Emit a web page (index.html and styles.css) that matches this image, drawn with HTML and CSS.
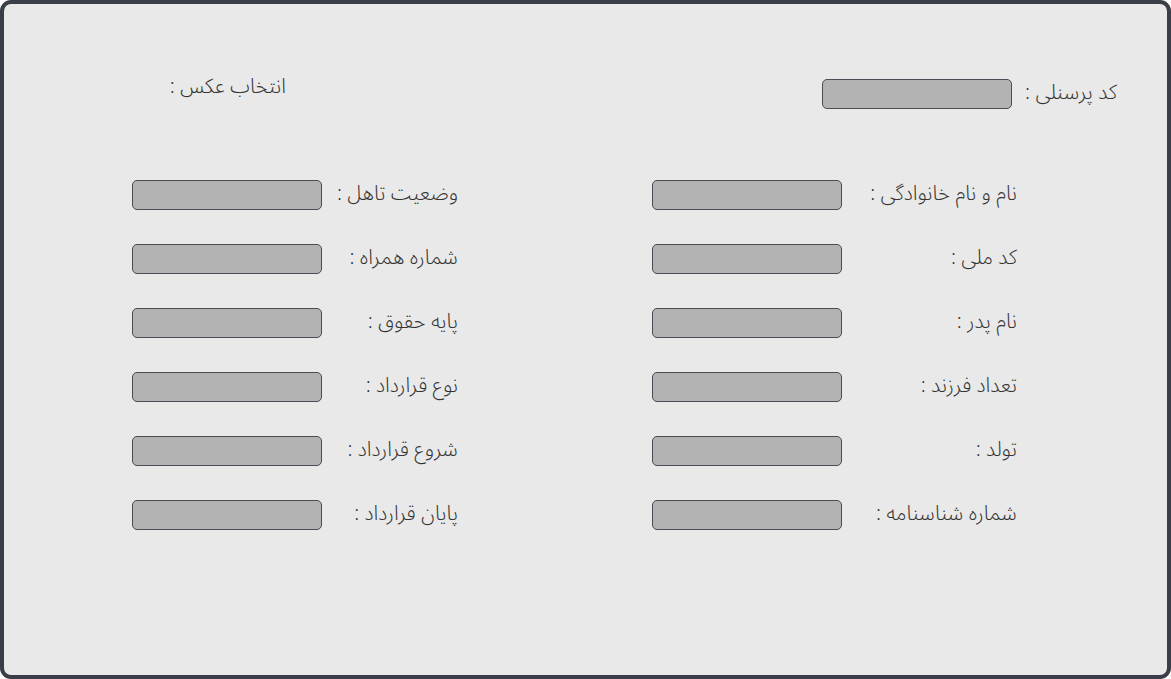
FILE: index.html
```html
<!DOCTYPE html>
<html lang="fa" dir="rtl">
<head>
<meta charset="utf-8">
<title>فرم پرسنل</title>
<link rel="stylesheet" href="styles.css">
</head>
<body>
<div class="panel">
  <div class="top-row">
    <div class="field top-field">
      <span class="label top-label">کد پرسنلی :</span>
      <span class="input"></span>
    </div>
    <div class="photo-label">انتخاب عکس :</div>
  </div>
  <div class="columns">
    <div class="column right-col">
      <div class="field"><span class="label">نام و نام خانوادگی :</span><span class="input"></span></div>
      <div class="field"><span class="label">کد ملی :</span><span class="input"></span></div>
      <div class="field"><span class="label">نام پدر :</span><span class="input"></span></div>
      <div class="field"><span class="label">تعداد فرزند :</span><span class="input"></span></div>
      <div class="field"><span class="label">تولد :</span><span class="input"></span></div>
      <div class="field"><span class="label">شماره شناسنامه :</span><span class="input"></span></div>
    </div>
    <div class="column left-col">
      <div class="field"><span class="label">وضعیت تاهل :</span><span class="input"></span></div>
      <div class="field"><span class="label">شماره همراه :</span><span class="input"></span></div>
      <div class="field"><span class="label">پایه حقوق :</span><span class="input"></span></div>
      <div class="field"><span class="label">نوع قرارداد :</span><span class="input"></span></div>
      <div class="field"><span class="label">شروع قرارداد :</span><span class="input"></span></div>
      <div class="field"><span class="label">پایان قرارداد :</span><span class="input"></span></div>
    </div>
  </div>
</div>
</body>
</html>
```
FILE: styles.css
```css
html, body {
  margin: 0;
  padding: 0;
  background: #ffffff;
}
body {
  font-family: "Noto Sans Arabic", "DejaVu Sans", sans-serif;
  font-size: 20.5px;
  font-weight: 300;
  color: #333333;
}
.panel {
  box-sizing: border-box;
  width: 1171px;
  height: 679px;
  border: 4px solid #393e48;
  border-radius: 11px;
  background: #e9e9e9;
  padding: 75px 50px 0 128px;
}
.top-row {
  display: flex;
  justify-content: space-between;
  align-items: flex-start;
}
.field {
  display: flex;
  align-items: center;
  height: 30px;
}
.label {
  display: block;
  line-height: 30px;
  white-space: nowrap;
  margin-top: -3px;
}
.top-label {
  width: 105px;
}
.input {
  display: block;
  box-sizing: border-box;
  width: 190px;
  height: 30px;
  background: #b3b3b3;
  border: 1px solid #4a4d55;
  border-radius: 5px;
}
.photo-label {
  width: 154px;
  line-height: 20px;
  margin-top: -2px;
}
.columns {
  display: flex;
  margin-top: 71px;
  margin-right: 100px;
  gap: 194px;
}
.column {
  display: flex;
  flex-direction: column;
  gap: 34px;
}
.right-col .label {
  width: 175px;
}
.left-col .label {
  width: 136px;
}
```
